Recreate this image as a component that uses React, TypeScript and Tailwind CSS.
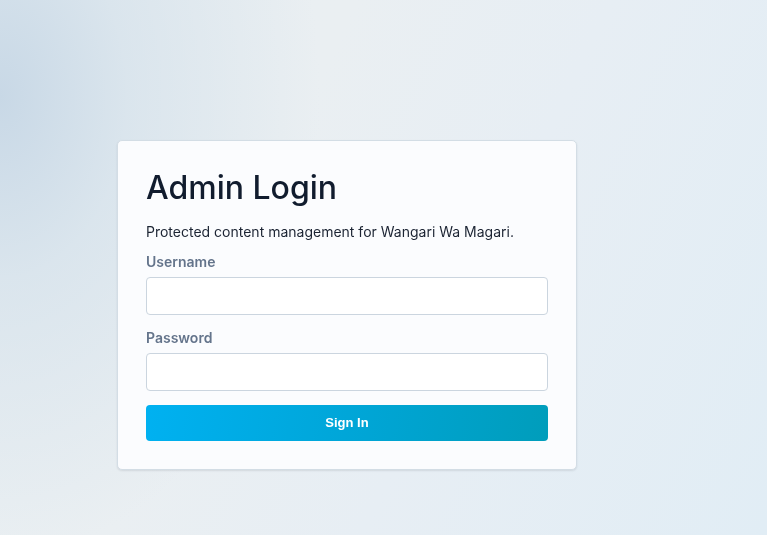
import React from "react";

export default function App() {
  return (
    <div className="min-h-[535px] w-full pt-[140px] pl-[117px] font-['Inter','Noto_Sans',sans-serif]">
      <div className="fixed inset-0 -z-10 bg-[#e6edf2] bg-[radial-gradient(ellipse_320px_460px_at_0%_18%,rgba(200,216,230,1)_0%,rgba(212,225,235,0.7)_40%,rgba(230,237,242,0)_100%),linear-gradient(115deg,#e9eff2_0%,#eaeff2_35%,#e7eef4_60%,#e1edf5_100%)]" />
      <div className="w-[460px] rounded-[5px] border border-[#d3dde5] bg-[#fbfcfe] px-[28px] pt-[28px] pb-[28px] shadow-[0_1px_2px_rgba(15,23,42,0.10)]">
        <h1 className="text-[32px] leading-[38px] font-medium text-[#111c2e]">
          Admin Login
        </h1>
        <p className="mt-[15px] text-[14px] leading-[20px] text-[#1c2433]">
          Protected content management for Wangari Wa Magari.
        </p>
        <label className="mt-[10px] block text-[14px] leading-[20px] font-semibold text-[#64748b]">
          Username
        </label>
        <input
          type="text"
          className="mt-[5px] block h-[38px] w-[402px] rounded-[4px] border border-[#cbd5df] bg-white"
        />
        <label className="mt-[13px] block text-[14px] leading-[20px] font-semibold text-[#64748b]">
          Password
        </label>
        <input
          type="password"
          className="mt-[5px] block h-[38px] w-[402px] rounded-[4px] border border-[#cbd5df] bg-white"
        />
        <button className="mt-[14px] block h-[36px] w-[402px] rounded-[4px] bg-[linear-gradient(100deg,#00b1f1_0%,#00a6d8_50%,#009dbb_100%)] text-[13px] font-bold text-white font-['Liberation_Sans',Arial,sans-serif]">
          Sign In
        </button>
      </div>
    </div>
  );
}
